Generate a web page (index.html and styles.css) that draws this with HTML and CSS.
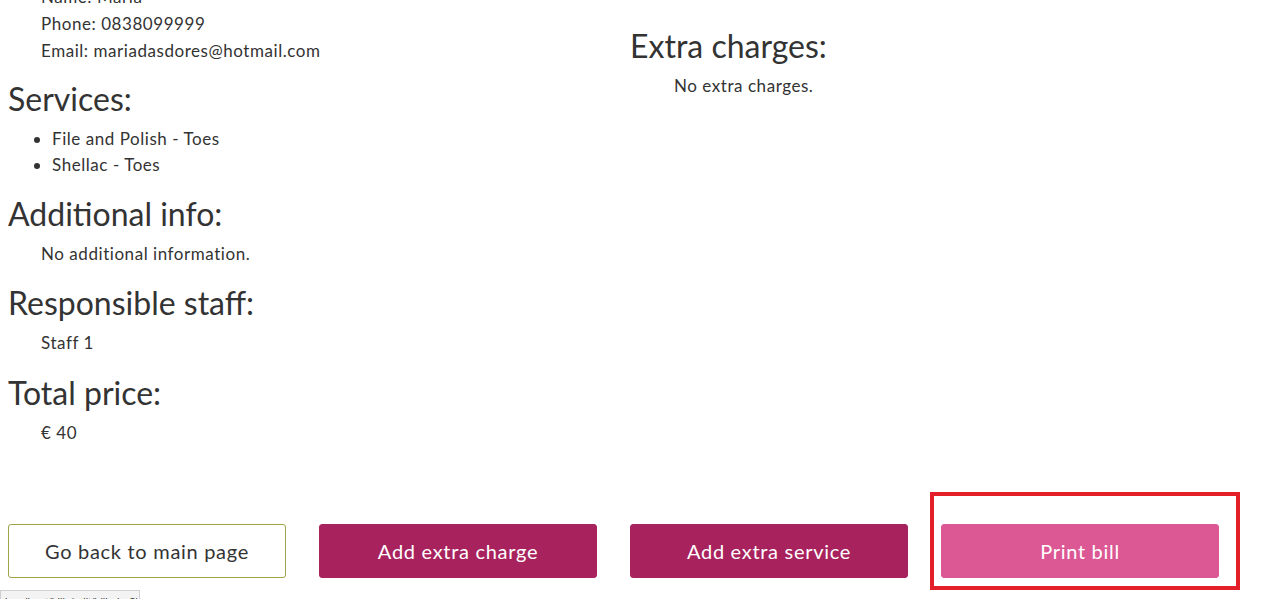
FILE: index.html
```html
<!DOCTYPE html>
<html lang="en">
<head>
<meta charset="utf-8">
<title>Bill</title>
<link rel="stylesheet" href="styles.css">
</head>
<body>
<main class="page">
  <div class="details">
    <section class="col col-left">
      <div class="client">
        <p class="line">Name: Maria</p>
        <p class="line">Phone: 0838099999</p>
        <p class="line">Email: mariadasdores@hotmail.com</p>
      </div>
      <h2 class="title title-first">Services:</h2>
      <ul class="services">
        <li>File and Polish - Toes</li>
        <li>Shellac - Toes</li>
      </ul>
      <h2 class="title">Additional info:</h2>
      <p class="line indent">No additional information.</p>
      <h2 class="title">Responsible staff:</h2>
      <p class="line indent">Staff 1</p>
      <h2 class="title">Total price:</h2>
      <p class="line indent">€ 40</p>
    </section>
    <section class="col col-right">
      <h2 class="title">Extra charges:</h2>
      <p class="line indent-wide">No extra charges.</p>
    </section>
  </div>
  <div class="actions">
    <button class="btn btn-outline">Go back to main page</button>
    <button class="btn btn-dark">Add extra charge</button>
    <button class="btn btn-dark">Add extra service</button>
    <div class="cell-highlight">
      <button class="btn btn-pink">Print bill</button>
      <span class="highlight"></span>
    </div>
  </div>
</main>
<div class="statusbar">localhost/bills/edit/bill.php?id=3</div>
</body>
</html>
```
FILE: styles.css
```css
html, body {
  margin: 0;
  padding: 0;
  height: 599px;
  overflow: hidden;
  background: #ffffff;
}
body {
  font-family: "Lato", "Open Sans", sans-serif;
  color: #333333;
  position: relative;
}
.page {
  padding: 0 8px;
  margin-top: -17px;
}
.details {
  display: grid;
  grid-template-columns: 622px 622px;
}
.col-right {
  padding-top: 44px;
}
.line {
  margin: 0;
  font-size: 17px;
  letter-spacing: 0.55px;
  line-height: 26.5px;
}
.client {
  padding-left: 33px;
}
.client .line {
  line-height: 27px;
}
.title {
  font-size: 32px;
  font-weight: 400;
  line-height: 38px;
  margin: 17px 0 8px;
  color: #333333;
}
.title-first {
  margin-top: 15.5px;
}
.col-right .title {
  margin-top: 0;
}
.services {
  margin: 0;
  padding-left: 44px;
  font-size: 17px;
  letter-spacing: 0.55px;
  line-height: 26px;
}
.indent {
  padding-left: 33px;
}
.indent-wide {
  padding-left: 44px;
}
.actions {
  display: grid;
  grid-template-columns: repeat(4, 278px);
  column-gap: 33px;
  margin-top: 78px;
}
.btn {
  height: 54px;
  width: 278px;
  font-family: inherit;
  font-size: 20px;
  letter-spacing: 0.7px;
  border-radius: 3px;
  cursor: pointer;
}
.btn-outline {
  background: #ffffff;
  color: #333333;
  border: 1px solid #9ea447;
}
.btn-dark {
  background: #a8225e;
  color: #ffffff;
  border: 1px solid #a8225e;
}
.btn-pink {
  background: #dc5894;
  color: #ffffff;
  border: 1px solid #dc5894;
}
.cell-highlight {
  position: relative;
}
.highlight {
  position: absolute;
  left: -11px;
  top: -32px;
  width: 302px;
  height: 90px;
  border: 4px solid #e3202a;
  pointer-events: none;
}
.statusbar {
  position: absolute;
  left: 0;
  top: 590px;
  width: 140px;
  height: 18px;
  background: #f3f3f3;
  border: 1px solid #d0d0d0;
  font-family: "Liberation Sans", sans-serif;
  font-size: 11px;
  line-height: 16px;
  color: #444444;
  padding: 3px 0 0 4px;
  box-sizing: border-box;
  overflow: hidden;
  white-space: nowrap;
}
```
